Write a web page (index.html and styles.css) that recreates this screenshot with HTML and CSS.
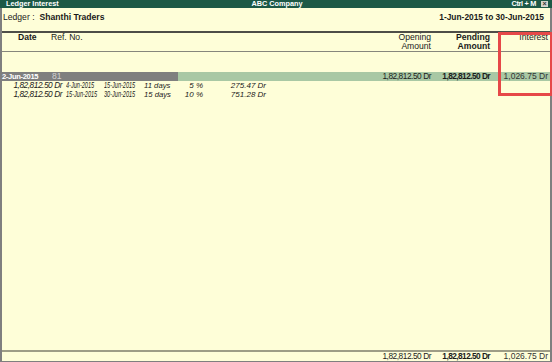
FILE: index.html
```html
<!DOCTYPE html>
<html>
<head>
	<meta charset="utf-8">
	<title>Ledger Interest</title>
	<link rel="stylesheet" href="styles.css">
</head>
<body>
	<div class="titlebar">
		<span class="tb-left">Ledger Interest</span>
		<span class="tb-mid">ABC Company</span>
		<span class="tb-right">Ctrl + M <span class="close">&times;</span></span>
	</div>
	<div class="window">
		<div class="ledger">
			<div><span class="lbl">Ledger :</span><b class="name">Shanthi Traders</b></div>
			<b class="period">1-Jun-2015 to 30-Jun-2015</b>
		</div>
		<div class="colhead amounts">
			<div class="h-left"><b class="h-date">Date</b><span>Ref. No.</span></div>
			<div class="num">Opening<br>Amount</div>
			<div class="num"><b>Pending<br>Amount</b></div>
			<div class="num">Interest</div>
		</div>
		<div class="entries">
			<div class="entry">
				<div class="e-bill"><b class="e-date">2-Jun-2015</b><span class="e-ref">81</span></div>
				<div></div>
				<div class="num amt">1,82,812.50 Dr</div>
				<div class="num amt"><b>1,82,812.50 Dr</b></div>
				<div class="num int">1,026.75 Dr</div>
			</div>
			<div class="calc">
				<span class="c-amt">1,82,812.50 Dr</span>
				<span class="c-date"><i class="cond">4-Jun-2015</i></span>
				<span class="c-date"><i class="cond">15-Jun-2015</i></span>
				<span class="c-days">11 days</span>
				<span class="c-rate">5 %</span>
				<span class="c-int">275.47 Dr</span>
			</div>
			<div class="calc">
				<span class="c-amt">1,82,812.50 Dr</span>
				<span class="c-date"><i class="cond">15-Jun-2015</i></span>
				<span class="c-date"><i class="cond">30-Jun-2015</i></span>
				<span class="c-days">15 days</span>
				<span class="c-rate">10 %</span>
				<span class="c-int">751.28 Dr</span>
			</div>
		</div>
		<div class="totals amounts">
			<div></div>
			<div class="num amt">1,82,812.50 Dr</div>
			<div class="num amt"><b>1,82,812.50 Dr</b></div>
			<div class="num int">1,026.75 Dr</div>
		</div>
	</div>
	<div class="mark"></div>
</body>
</html>
```

FILE: styles.css
```css
html{background: #fefed8;}
body{position: relative; width: 552px; height: 362px; margin: 0; overflow: hidden; font-family: "Liberation Sans", Arial, sans-serif; font-size: 8.6px; color: #1a1a1a;}
b{font-weight: bold;}

.titlebar{display: grid; grid-template-columns: 1fr auto 1fr; align-items: center; height: 8px; padding: 0 4px 0 6px; background: #1d5946; color: #fff; font-size: 7.3px; font-weight: bold; line-height: 8px;}
.tb-mid{text-align: center;}
.tb-right{display: flex; justify-content: flex-end; align-items: center; letter-spacing: -0.3px;}
.close{display: inline-block; width: 7px; height: 6px; margin-left: 5px; background: #d4d4cc; color: #333; font-size: 7px; line-height: 6px; text-align: center; letter-spacing: 0;}

.window{display: flex; flex-direction: column; height: 354px; box-sizing: border-box; border-left: 2px solid #7f7f7f; border-right: 2px solid #7f7f7f; border-bottom: 1px solid #7f7f7f;}

.ledger{display: flex; justify-content: space-between; height: 25px; box-sizing: border-box; padding: 4px 6px 0 1px; line-height: 10px; border-bottom: 2px solid #4e4e48;}
.ledger .name{margin-left: 5px;}
.period{font-size: 8.4px;}

.amounts{display: grid; grid-template-columns: 1fr 59px 59px 58px; padding-right: 2px;}
.num{text-align: right; white-space: nowrap;}

.colhead{height: 18px; line-height: 9px; border-bottom: 1px solid #86867c;}
.h-left{display: flex;}
.h-date{width: 33px; padding-left: 16px;}

.entries{margin-top: 20px; flex: 1;}
.entry{display: grid; grid-template-columns: 176px 1fr 59px 59px 58px; padding-right: 2px; height: 9px; line-height: 9px; background: #a9c8a4;}
.e-bill{display: flex; background: #7f7f7f;}
.e-date{width: 50px; color: #fff; font-size: 7.6px; letter-spacing: -0.35px;}
.e-ref{color: #d2d2d2;}

.amt{font-size: 8.3px; letter-spacing: -0.45px;}
.amt b{letter-spacing: -0.55px;}
.int{font-size: 8.5px; color: #333;}

.calc{display: grid; grid-template-columns: 60px 39px 40px 36px 26px 63px; line-height: 9px; font-style: italic; font-size: 8px;}
.c-amt{text-align: right; font-size: 8.3px; letter-spacing: -0.45px;}
.c-date{padding-left: 4px; white-space: nowrap;}
.c-date + .c-date{padding-left: 3px;}
.cond{display: inline-block; font-size: 8.3px; transform: scaleX(.67); transform-origin: left center;}
.c-days{padding-left: 3px; font-size: 7.7px;}
.c-rate, .c-int{text-align: right;}

.totals{height: 9px; line-height: 9px; border-top: 2px solid #9d9d86;}

.mark{position: absolute; left: 498px; top: 32px; width: 55px; height: 64px; box-sizing: border-box; border: 3px solid #e64848;}
```
